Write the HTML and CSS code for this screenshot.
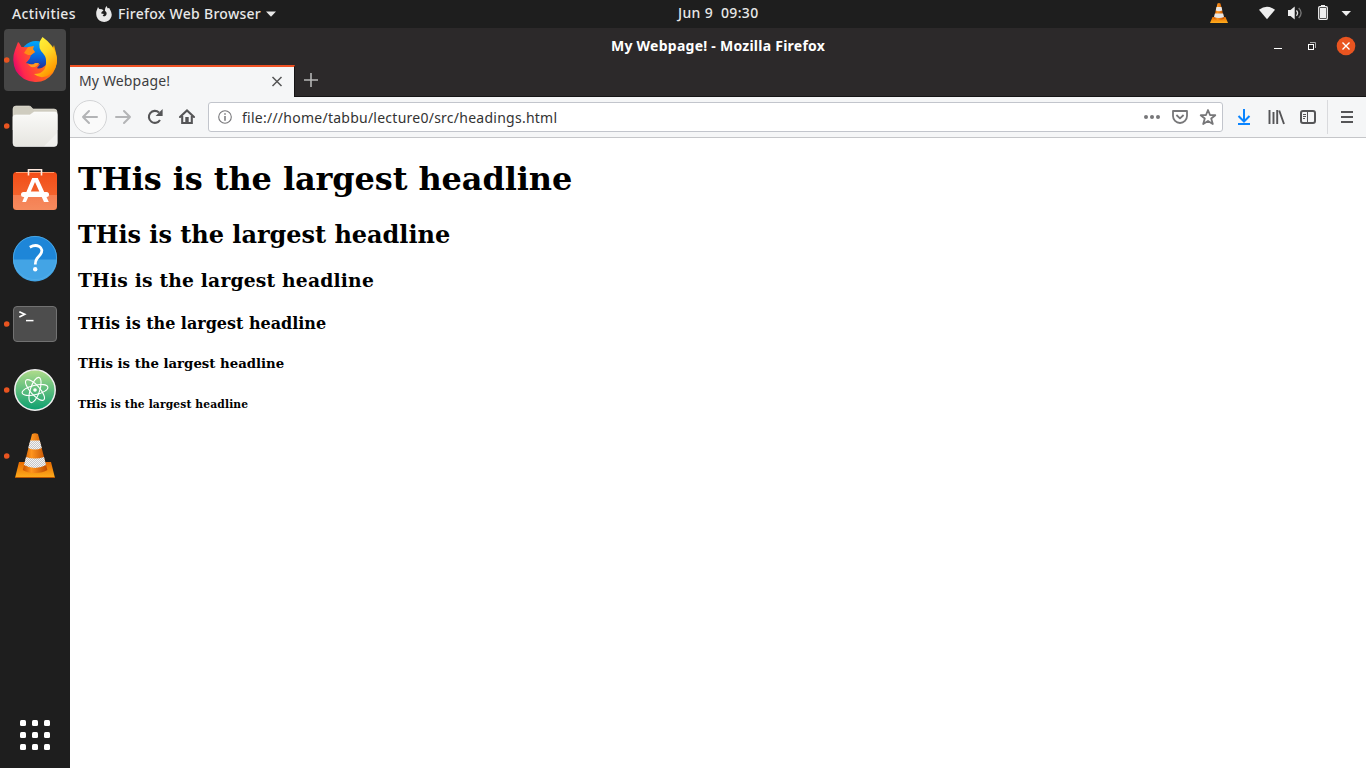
FILE: index.html
```html
<!DOCTYPE html>
<html lang="en">
<head>
<meta charset="utf-8">
<title>My Webpage!</title>
<link rel="stylesheet" href="styles.css">
</head>
<body>
<svg class="defs" width="0" height="0">
  <defs>
    <linearGradient id="cone" x1="0" x2="1" y1="0" y2="0"><stop offset="0" stop-color="#c95300"/><stop offset=".35" stop-color="#ff951d"/><stop offset="1" stop-color="#bd4a00"/></linearGradient>
    <linearGradient id="base" x1="0" x2="0" y1="0" y2="1"><stop offset="0" stop-color="#e86b00"/><stop offset="1" stop-color="#ffae1d"/></linearGradient>
    <pattern id="check" width="2" height="2" patternUnits="userSpaceOnUse"><rect width="2" height="2" fill="#f4f4f4"/><rect width="1" height="1" fill="#c6c6c6"/><rect x="1" y="1" width="1" height="1" fill="#c6c6c6"/></pattern>
    <linearGradient id="fox" x1="0" x2="1" y1=".7" y2=".35"><stop offset="0" stop-color="#d80070"/><stop offset=".2" stop-color="#ff294c"/><stop offset=".55" stop-color="#ff5b24"/><stop offset="1" stop-color="#ffaf00"/></linearGradient>
    <linearGradient id="flame" x1="0" x2=".5" y1="0" y2="1"><stop offset="0" stop-color="#fff83d"/><stop offset=".5" stop-color="#ffda28"/><stop offset="1" stop-color="#ff9800"/></linearGradient>
    <linearGradient id="globe" x1="0" x2="0" y1="0" y2="1"><stop offset="0" stop-color="#00a8fa"/><stop offset=".5" stop-color="#0865dd"/><stop offset="1" stop-color="#331a78"/></linearGradient>
    <linearGradient id="paper" x1="0" x2="0" y1="0" y2="1"><stop offset="0" stop-color="#fafaf8"/><stop offset="1" stop-color="#e6e5e0"/></linearGradient>
    <linearGradient id="leaf" x1="0" x2="0" y1="0" y2="1"><stop offset="0" stop-color="#b1dc8b"/><stop offset="1" stop-color="#0b9f70"/></linearGradient>
    <linearGradient id="bag" x1="0" x2="0" y1="0" y2="1"><stop offset="0" stop-color="#f24c16"/><stop offset="1" stop-color="#f3713b"/></linearGradient>
  </defs>
</svg>
<header class="topbar">
  <span class="activities">Activities</span>
  <svg class="app-logo" width="16" height="16" viewBox="0 0 16 16"><path d="M2 1 3.2 3 6 3.3 7.5 4.4 5.6 6 5.2 7.5 8.1 7.9 6.6 9.4 8 10.4Q10.8 10 10.6 6.8L8.9 4.4Q8.8 1.7 10.8 0L11.5 2.3 13.2 2 14.4 4.2Q16.4 7.5 15.4 10.8 13.6 15.6 8.2 15.9 2.4 15.7.6 10.6-.3 6 .8 4.2Z" fill="#e8e8e8"/></svg>
  <span class="app-name">Firefox Web Browser</span>
  <svg class="caret" width="10" height="6" viewBox="0 0 10 6"><path d="M0 .5H10L5 5.7Z" fill="#e8e8e8"/></svg>
  <span class="clock">Jun 9&nbsp; 09:30</span>
  <svg class="tray" width="150" height="28" viewBox="0 0 150 28">
    <path d="M2.5 17H15.5L18 23H0Z" fill="url(#base)"/><path d="M7.5 3.5Q9 2.4 10.5 3.5L14.2 18.5Q9 21.5 3.8 18.5Z" fill="url(#cone)"/><path d="M6.5 7H11.5L12.3 10.5Q9 11.8 5.7 10.5ZM4.9 13.5H13.1L14 17Q9 19 4 17Z" fill="#e6e6e6"/>
    <path d="M49 9.7Q57 3.9 65 9.7L57 19.3Z" fill="#eee"/>
    <path d="M78 10H80.5L84.7 6.5V19.4L80.5 16H78Z" fill="#eee"/><path d="M86.4 10.5Q88.8 13 86.4 15.7" fill="none" stroke="#ddd" stroke-width="1.3"/><path d="M88.7 8Q93.5 13 88.7 18" fill="none" stroke="#777" stroke-width="1.3"/>
    <path d="M111 5H115V6.5H111ZM110 8H116V18H110Z" fill="#eee"/><rect x="108.7" y="6.7" width="8.6" height="12.6" rx="1" fill="none" stroke="#eee" stroke-width="1.3"/>
    <path d="M131.5 11H141L136.2 16Z" fill="#eee"/>
  </svg>
</header>
<div class="desktop">
  <nav class="dock">
    <div class="tile active"><svg viewBox="0 0 62 62"><circle cx="2.7" cy="31" r="2.8" fill="#e95420"/>
      <circle cx="32" cy="28" r="16" fill="url(#globe)"/>
      <path d="M15.2 14 17.5 18 24 18.2 27 21 31 23 27 26 25.5 30 22 34Q28 37 36 35L33 39Q36 41 42 36L50 16 52 24Q55 34 49 44 42 53.5 31 53 18 52 12 42 7 31 11 21L14 13Z" fill="url(#fox)"/>
      <path d="M38.5 8Q50 16 52.5 27 55 40 43 47 36 50 30 45 43 45 42 31 42 27 37 22 33 15 38.5 8Z" fill="url(#flame)"/>
      <path d="M24 18 30 17 29 20 31 23 27 26 24 26 20 24Z" fill="#ff8b16"/><path d="M23 34Q28 37 31 34H35Q33 39 27 38Z" fill="#ff9b20"/></svg></div>
    <div class="tile"><svg viewBox="0 0 62 62"><circle cx="2.7" cy="31" r="2.8" fill="#e95420"/>
      <path d="M9 14Q9 11 12 11H25Q27 11 28 13L29 14H50Q53 14 53 17V35H9Z" fill="#cfccbf" stroke="#e7e4d9" stroke-width=".6"/>
      <path d="M9 22Q9 20 12 20H26L30 17H51Q53.3 17 53.3 20V48Q53.3 51.5 50 51.5H12Q9 51.5 9 48Z" fill="url(#paper)" stroke="#fff" stroke-width=".6"/><path d="M40 51.2 53 38V48Q53 51 50 51Z" fill="#fff" opacity=".4"/></svg></div>
    <div class="tile"><svg viewBox="0 0 62 62">
      <rect x="9" y="11" width="44" height="38" rx="3.5" fill="url(#bag)"/><path d="M9 34H53V45Q53 49 49 49H13Q9 49 9 45Z" fill="#fff" opacity=".18"/><path d="M12 11.5H50" stroke="#ff9b6c"/><path d="M24.5 14.5V8.8H37.5V14.5" fill="none" stroke="#ffe9de" stroke-width="1.6"/>
      <path d="M28.2 17H33.8L44.8 41H40L37.3 35H24.7L22 41H18.2ZM31 21 26.8 30.5H35.3Z" fill="#fff" fill-rule="evenodd"/><rect x="17" y="31" width="28" height="5" rx="2.5" fill="#fff"/></svg></div>
    <div class="tile"><svg viewBox="0 0 62 62">
      <circle cx="31" cy="31" r="22" fill="#1e86d8"/><path d="M9 32.5H53A22 22 0 0 1 9 32.5Z" fill="#43a4e5"/><circle cx="31" cy="31" r="21.6" fill="none" stroke="#53aee9" stroke-width=".8"/>
      <path d="M25.8 20.2Q31 17.3 35.2 19.4 39.8 22.5 36.4 27.5L33 31.5Q31.3 33.5 31.3 37.5" fill="none" stroke="#fff" stroke-width="2.8"/><circle cx="31.2" cy="42.3" r="2.2" fill="#fff"/></svg></div>
    <div class="tile"><svg viewBox="0 0 62 62"><circle cx="2.7" cy="31" r="2.8" fill="#e95420"/>
      <rect x="9.5" y="13.5" width="43" height="35" rx="3.5" fill="#4d4d4d" stroke="#727272"/><path d="M15.3 18.7 20.7 21.3 15.3 24" fill="none" stroke="#fff" stroke-width="1.7"/><path d="M22 27.6H29.5" stroke="#fff" stroke-width="1.5"/></svg></div>
    <div class="tile"><svg viewBox="0 0 62 62"><circle cx="2.7" cy="31" r="2.8" fill="#e95420"/>
      <circle cx="31" cy="31" r="20.2" fill="url(#leaf)" stroke="#f0f0f0" stroke-width="1.5"/><g fill="none" stroke="#fff" stroke-width="1.1"><ellipse cx="31" cy="31" rx="13.2" ry="4.7" transform="rotate(-13 31 31)"/><ellipse cx="31" cy="31" rx="13.2" ry="4.7" transform="rotate(48 31 31)"/><ellipse cx="31" cy="31" rx="13.2" ry="4.7" transform="rotate(108 31 31)"/></g><circle cx="31" cy="31" r="1.8" fill="#fff"/></svg></div>
    <div class="tile"><svg viewBox="0 0 62 62"><circle cx="2.7" cy="31" r="2.8" fill="#e95420"/>
      <path d="M15 37H47L51 53H11Z" fill="url(#base)"/><path d="M11 52.5H51" stroke="#b95500"/><path d="M28 9Q31 7.5 34 9L43.4 45Q39 48 31 48T18.8 45Z" fill="url(#cone)"/><path d="M26.2 15.5H35.8L37.8 23Q31 26 24.2 23ZM22 32Q31 35 40 32L42 40Q31 46 20 40Z" fill="url(#check)"/></svg></div>
    <div class="apps"><i></i><i></i><i></i><i></i><i></i><i></i><i></i><i></i><i></i></div>
  </nav>
  <main class="window">
    <div class="titlebar"><span class="title">My Webpage! - Mozilla Firefox</span>
      <svg class="controls" width="100" height="37" viewBox="0 0 100 37"><path d="M8 20.5H16" stroke="#fff"/><path d="M44 14.5H49.5V20" fill="none" stroke="#aaa"/><rect x="42.5" y="16.5" width="5" height="5" fill="none" stroke="#fff"/><circle cx="80" cy="18" r="9.3" fill="#e95420"/><path d="M76.5 14.5 83.5 21.5M83.5 14.5 76.5 21.5" stroke="#fff" stroke-width="1.4"/></svg>
    </div>
    <div class="tabs">
      <div class="tab"><span class="tab-title">My Webpage!</span><svg width="12" height="12" viewBox="0 0 12 12"><path d="M1.5 1 10.5 10M10.5 1 1.5 10" stroke="#555" stroke-width="1.5"/></svg></div>
      <svg class="new" width="14" height="14" viewBox="0 0 14 14"><path d="M0 7H14M7 0V14" stroke="#b6b6b6" stroke-width="1.6"/></svg>
    </div>
    <div class="toolbar">
      <svg class="nav" width="138" height="40" viewBox="0 0 138 40"><circle cx="20" cy="20" r="16.5" fill="#fafafa" stroke="#d3d4d6"/><g fill="none" stroke="#b3b4b6" stroke-width="2" stroke-linecap="round" stroke-linejoin="round"><path d="M27 20H13M19 14 13 20 19 26"/><path d="M46 20H60M54 14 60 20 54 26"/></g><g fill="none" stroke="#555557" stroke-width="2.1"><path d="M90 23A6 6 0 1 1 89 15.5"/><path d="M110 20 117 13.4 124 20" stroke-linecap="round"/><path d="M112.2 19V26H121.8V19"/></g><path d="M92.6 12V19H85.6Z" fill="#555557"/><path d="M115.3 20H118.7V26H115.3Z" fill="#555557"/></svg>
      <div class="url">
        <svg width="14" height="14" viewBox="0 0 14 14"><circle cx="7" cy="7" r="6.3" fill="none" stroke="#77777a" stroke-width="1.1"/><path d="M7 6V10.7M7 3.2V4.8" stroke="#77777a" stroke-width="1.5"/></svg>
        <span class="address">file:///home/tabbu/lecture0/src/headings.html</span>
        <svg class="url-actions" width="78" height="20" viewBox="0 0 78 20"><g fill="#777779"><circle cx="5" cy="10" r="2"/><circle cx="11" cy="10" r="2"/><circle cx="17" cy="10" r="2"/></g><g fill="none" stroke="#777779" stroke-width="1.8" stroke-linejoin="round"><path d="M32 4H46V9A7 7 0 0 1 32 9ZM35.4 8 39 11.4 42.6 8"/><path d="M67 3 69 8 74.3 8.2 70.2 11.5 71.8 17 67 14 62.2 17 63.8 11.5 59.7 8.2 65 8Z"/></g></svg>
      </div>
      <svg class="tools" width="143" height="40" viewBox="0 0 143 40"><g fill="none" stroke="#555557" stroke-width="2"><path d="M21 12V24M15.5 19 21 24.5 26.5 19M15 27H27" stroke="#0a84ff"/><path d="M46.5 13V27M50.5 15V27M54.2 13V27M56.2 13.5 61 27" stroke-width="1.9"/><rect x="78" y="14" width="14" height="12" rx="2"/><path d="M84.5 14V26M80 17.5H83M80 19.5H83M80 21.5H82" stroke-width="1"/><path d="M118 15H130M118 20H130M118 25H130"/></g><path d="M104.5 3V37" stroke="#d9dadd"/></svg>
    </div>
    <article class="page">
      <h1>THis is the largest headline</h1>
      <h2>THis is the largest headline</h2>
      <h3>THis is the largest headline</h3>
      <h4>THis is the largest headline</h4>
      <h5>THis is the largest headline</h5>
      <h6>THis is the largest headline</h6>
    </article>
  </main>
</div>
</body>
</html>
```
FILE: styles.css
```css
* { box-sizing: border-box; }
body { margin: 0; width: 1366px; height: 768px; overflow: hidden; display: flex; flex-direction: column; background: #1e1e1e; font: 14px/20px "Noto Sans", sans-serif; white-space: nowrap; }
svg { display: block; flex: none; }
.defs { position: absolute; }
.topbar { height: 28px; flex: none; display: flex; align-items: center; padding-left: 12px; color: #e8e8e8; font-weight: 500; }
.activities { width: 84px; letter-spacing: .36px; }
.app-name { width: 143px; margin-left: 6px; letter-spacing: .28px; }
.caret { margin-left: 5px; }
.clock { margin-left: 402px; width: 82px; letter-spacing: .35px; padding-bottom: 2px; }
.tray { margin-left: 450px; }
.desktop { flex: 1; display: flex; min-height: 0; }
.dock { width: 70px; padding: 1px 4px 18px; display: flex; flex-direction: column; gap: 4px; }
.tile { width: 62px; height: 62px; border-radius: 4px; flex: none; }
.tile svg { width: 62px; height: 62px; }
.active { background: #464646; }
.apps { margin: auto auto 0; display: grid; grid-template-columns: repeat(3, 6px); gap: 6px; }
.apps i { width: 6px; height: 6px; border-radius: 1.5px; background: #fff; }
.window { flex: 1; background: #fff; display: flex; flex-direction: column; }
.titlebar { height: 37px; flex: none; background: #2c292a; display: flex; align-items: center; justify-content: flex-end; color: #fff; font-weight: 700; }
.title { width: 214px; margin-right: 441px; letter-spacing: .25px; padding-bottom: 2px; }
.tabs { height: 32px; flex: none; background: #2c292a; display: flex; align-items: center; box-shadow: inset 0 -1px #151415; }
.tab { width: 225px; height: 32px; border-top: 2px solid #f05123; border-right: 1px solid #151415; background: #f5f6f7; color: #3d3d3f; display: flex; align-items: center; justify-content: space-between; padding: 0 11px 0 9px; }
.tab-title { letter-spacing: .15px; padding-bottom: 2px; }
.new { margin: -2px 0 0 9px; }
.toolbar { height: 41px; flex: none; background: #f5f6f7; border-bottom: 1px solid #c5c6c9; display: flex; align-items: center; }
.url { width: 1015px; height: 30px; border: 1px solid #c2c5cc; border-radius: 3px; background: #fff; display: flex; align-items: center; padding: 0 3px 0 9px; color: #333; }
.address { margin-left: 10px; letter-spacing: .25px; padding-top: 2px; }
.url-actions { margin-left: auto; }
.page { padding: 1px 8px 0; font-family: "DejaVu Serif", serif; font-size: 16px; line-height: normal; color: #000; display: flow-root; }
.page h1 { letter-spacing: -.11px; }
.page h2 { letter-spacing: -.03px; }
.page h3 { letter-spacing: .19px; }
.page h4 { letter-spacing: -.02px; margin-top: 23.3px; }
.page h5 { margin-top: 23.2px; }
.page h6 { letter-spacing: .13px; margin-top: 27px; }
```
